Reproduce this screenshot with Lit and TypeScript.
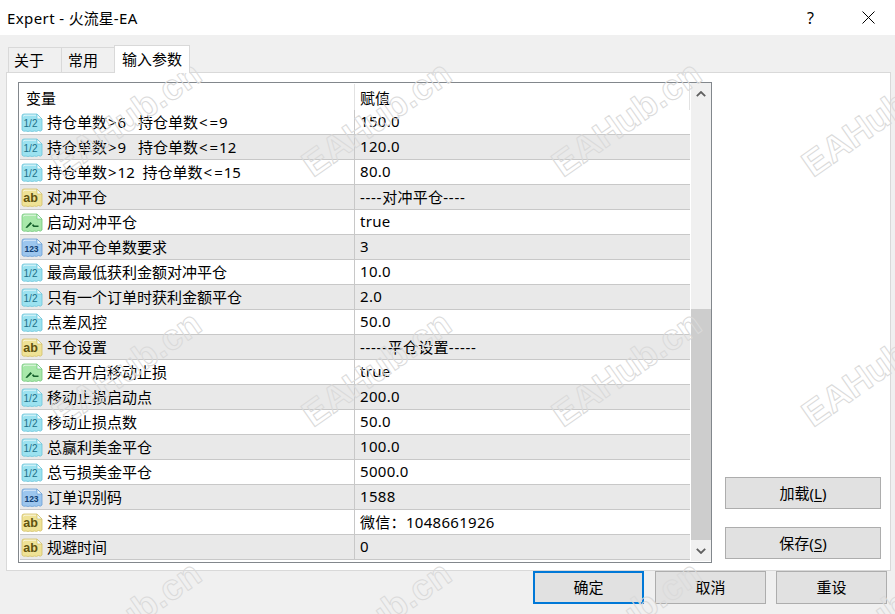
import { LitElement, html, css, svg } from 'lit';
import { customElement } from 'lit/decorators.js';

type Kind = 'num' | 'str' | 'bool' | 'int';

const ROWS: [Kind, string, string][] = [
  ['num', '持仓单数>6   持仓单数<=9', '150.0'],
  ['num', '持仓单数>9   持仓单数<=12', '120.0'],
  ['num', '持仓单数>12  持仓单数<=15', '80.0'],
  ['str', '对冲平仓', '----对冲平仓----'],
  ['bool', '启动对冲平仓', 'true'],
  ['int', '对冲平仓单数要求', '3'],
  ['num', '最高最低获利金额对冲平仓', '10.0'],
  ['num', '只有一个订单时获利金额平仓', '2.0'],
  ['num', '点差风控', '50.0'],
  ['str', '平仓设置', '-----平仓设置-----'],
  ['bool', '是否开启移动止损', 'true'],
  ['num', '移动止损启动点', '200.0'],
  ['num', '移动止损点数', '50.0'],
  ['num', '总赢利美金平仓', '100.0'],
  ['num', '总亏损美金平仓', '5000.0'],
  ['int', '订单识别码', '1588'],
  ['str', '注释', '微信：1048661926'],
  ['str', '规避时间', '0'],
];

// fill, edge, mark colour
const ICON_COLORS: Record<Kind, [string, string, string]> = {
  num: ['#9ce2f0', '#6cc4d8', '#1d6f86'],
  str: ['#efe296', '#d2c06a', '#5f5210'],
  bool: ['#a8e8aa', '#74c67c', '#14602a'],
  int: ['#9cc6ee', '#6a9fd4', '#123f73'],
};

function rowIcon(kind: Kind) {
  const [fill, edge, ink] = ICON_COLORS[kind];
  const sheet = svg`
    <path d="M1 4 Q1 2 3 2 H16 L21 7 V18 Q19.5 20 17.5 18.5 Q15.5 20 13.5 19 Q11 20 9 19 Q7 20 5 19 Q2.5 20 1 18 Z"
      fill=${fill} stroke=${edge} stroke-width="0.8"/>
    <path d="M2.5 4.5 Q2.5 3.2 4 3.2 H15" fill="none" stroke="#fff" stroke-opacity=".7" stroke-width="1"/>
    <path d="M16 2 V7 H21 Z" fill="#f2fafc" stroke=${edge} stroke-width="0.7"/>`;
  let mark;
  if (kind === 'num') {
    mark = svg`<text x="9.5" y="14.5" text-anchor="middle" class="mark" fill=${ink} font-size="10">1/2</text>`;
  } else if (kind === 'str') {
    mark = svg`<text x="9.5" y="15" text-anchor="middle" class="mark strong" fill=${ink} font-size="12.5">ab</text>`;
  } else if (kind === 'int') {
    mark = svg`<text x="10.5" y="15" text-anchor="middle" class="mark strong" fill=${ink} font-size="8.5">123</text>`;
  } else {
    mark = svg`
      <path d="M4.5 15.5 L9.5 10 L11 11.5 L6 16 Z" fill=${ink}/>
      <path d="M12 12 L13.5 13.5 H17.5 V15 H12.5 L11 13.5 Z" fill=${ink}/>`;
  }
  return html`<svg class="icon" width="22" height="21" viewBox="0 0 22 21">${sheet}${mark}</svg>`;
}

// < = > and - sit wider in the reference font than in Noto
function spaced(text: string) {
  return text.split(/([<>=-])/).map((part) => {
    if (part === '-') return html`<span class="dash">-</span>`;
    if (part === '<' || part === '>' || part === '=') return html`<span class="op">${part}</span>`;
    return part;
  });
}

@customElement('app-root')
export class AppRoot extends LitElement {
  static styles = css`
    :host {
      display: block;
      position: relative;
      width: 895px;
      height: 614px;
      overflow: hidden;
      background: #f0f0f0;
      font-family: 'Noto Sans', 'Noto Sans CJK SC', sans-serif;
      font-size: 15px;
      color: #000;
    }
    .titlebar {
      height: 35px;
      background: #fff;
      display: flex;
      align-items: center;
      padding-left: 7px;
    }
    .title { flex: 1; }
    .latin { letter-spacing: 0.4px; }
    .help { width: 13px; margin-right: 45px; font-size: 16px; text-align: center; }
    .close { margin-right: 20px; display: block; }
    .body {
      height: 579px;
      padding: 10px 4px 0 6px;
      box-sizing: border-box;
    }
    .tabs {
      display: flex;
      height: 27px;
      padding-left: 2px;
      align-items: flex-end;
    }
    .tab {
      height: 25px;
      width: 53px;
      border: 1px solid #d9d9d9;
      border-bottom: none;
      border-right: none;
      box-sizing: border-box;
      padding: 0 0 2px 5px;
      display: flex;
      align-items: center;
    }
    .tab + .tab { padding-left: 6px; }
    .tab.active {
      height: 28px;
      width: 76px;
      padding-left: 7px;
      background: #fff;
      border-right: 1px solid #d9d9d9;
      margin-bottom: -1px;
      position: relative;
      z-index: 1;
    }
    .panel {
      height: 499px;
      width: 885px;
      box-sizing: border-box;
      background: #fff;
      border: 1px solid #d9d9d9;
      padding: 9px 0 0 11px;
      display: flex;
      gap: 13px;
    }
    .list {
      width: 694px;
      height: 481px;
      box-sizing: border-box;
      border: 1px solid #82878c;
      display: flex;
      padding-left: 1px;
    }
    .table { width: 670px; padding-top: 1px; flex: none; }
    .head, .row {
      display: grid;
      grid-template-columns: 334px 1fr;
      box-sizing: border-box;
    }
    .head { height: 26px; align-items: center; border-right: 1px solid #e2e2e2; }
    .row {
      height: 25px;
      border-bottom: 1px solid #c8c8c8;
      align-items: center;
    }
    .row.alt { background: #e9e9e9; }
    .head .name { padding-left: 6px; }
    .name {
      display: flex;
      align-items: center;
      height: 100%;
      padding-left: 1px;
      white-space: pre;
      gap: 4px;
    }
    .value {
      height: 100%;
      display: flex;
      align-items: center;
      padding-left: 5px;
      white-space: pre;
      border-left: 1px solid #c8c8c8;
    }
    .row .name span, .row .value span { padding-bottom: 2px; }
    .row .value { letter-spacing: 0.3px; }
    .row .name span span, .row .value span span { padding-bottom: 0; }
    .head .value { border-left-color: #e2e2e2; }
    .op { margin: 0 1px; }
    .dash { margin-right: 0.4px; }
    .icon { flex: none; }
    .mark { font-family: 'Liberation Sans', sans-serif; }
    .mark.strong { font-weight: 700; }
    .scroll {
      width: 20px;
      margin-left: 1px;
      background: #f0f0f0;
      display: flex;
      flex-direction: column;
      margin-bottom: 1px;
    }
    .arrow { height: 21px; display: flex; align-items: center; justify-content: center; flex: none; }
    .track { flex: 1; display: flex; flex-direction: column; justify-content: flex-end; }
    .thumb { height: 231px; background: #cdcdcd; }
    .side {
      flex: 1;
      display: flex;
      flex-direction: column;
      justify-content: flex-end;
      gap: 18px;
      padding-bottom: 11px;
      margin-right: 9px;
    }
    button {
      font: inherit;
      color: #000;
      background: #e1e1e1;
      border: 1px solid #adadad;
      padding: 0 0 2px;
      box-sizing: border-box;
    }
    .side button { height: 32px; width: 156px; }
    .footer {
      display: flex;
      justify-content: flex-end;
      gap: 11px;
      margin-right: 4px;
    }
    .footer button { height: 33px; width: 111px; }
    .footer button.default { border: 2px solid #0078d7; }
    .footer button + button + button { margin-left: -1px; }
    u { text-underline-offset: 2px; }
    .wm {
      position: absolute;
      inset: 0;
      pointer-events: none;
    }
    .wm text {
      font-family: 'Liberation Sans', sans-serif;
      font-size: 36px;
      font-weight: 700;
      fill: none;
      stroke: #dadada;
      stroke-width: 1;
      stroke-linejoin: round;
    }
  `;

  private watermark() {
    const marks = [];
    for (const y of [178, 428, 678]) {
      for (const x of [63, 313, 563, 813]) {
        marks.push(svg`<text transform="translate(${x} ${y}) rotate(-35)">EAHub.cn</text>`);
      }
    }
    return html`<svg class="wm" width="895" height="614" viewBox="0 0 895 614">${marks}</svg>`;
  }

  render() {
    return html`
      <div class="titlebar">
        <span class="title"><span class="latin">Expert - </span>火流星<span class="latin">-EA</span></span>
        <span class="help">?</span>
        <svg class="close" width="13" height="13" viewBox="0 0 13 13">
          <path d="M.5.5l12 12M12.5.5l-12 12" stroke="#000" stroke-width="1" fill="none"/>
        </svg>
      </div>
      <div class="body">
        <div class="tabs">
          <div class="tab">关于</div>
          <div class="tab">常用</div>
          <div class="tab active">输入参数</div>
        </div>
        <div class="panel">
          <div class="list">
            <div class="table">
              <div class="head">
                <div class="name">变量</div>
                <div class="value">赋值</div>
              </div>
              ${ROWS.map(
                ([kind, name, value], i) => html`
                  <div class="row ${i % 2 ? 'alt' : ''}">
                    <div class="name">${rowIcon(kind)}<span>${spaced(name)}</span></div>
                    <div class="value"><span>${spaced(value)}</span></div>
                  </div>
                `,
              )}
            </div>
            <div class="scroll">
              <div class="arrow">
                <svg width="10" height="6" viewBox="0 0 10 6"><path d="M.8 5.2L5 1l4.2 4.2" fill="none" stroke="#606060" stroke-width="1.8"/></svg>
              </div>
              <div class="track"><div class="thumb"></div></div>
              <div class="arrow">
                <svg width="10" height="6" viewBox="0 0 10 6"><path d="M.8.8L5 5 9.2.8" fill="none" stroke="#606060" stroke-width="1.8"/></svg>
              </div>
            </div>
          </div>
          <div class="side">
            <button>加载(<u>L</u>)</button>
            <button>保存(<u>S</u>)</button>
          </div>
        </div>
        <div class="footer">
          <button class="default">确定</button>
          <button>取消</button>
          <button>重设</button>
        </div>
      </div>
      ${this.watermark()}
    `;
  }
}
